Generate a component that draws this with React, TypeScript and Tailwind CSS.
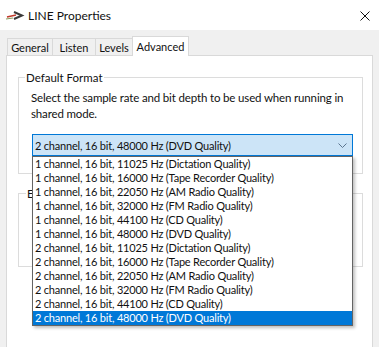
import React from "react";

const formats = [
  "1 channel, 16 bit, 11025 Hz (Dictation Quality)",
  "1 channel, 16 bit, 16000 Hz (Tape Recorder Quality)",
  "1 channel, 16 bit, 22050 Hz (AM Radio Quality)",
  "1 channel, 16 bit, 32000 Hz (FM Radio Quality)",
  "1 channel, 16 bit, 44100 Hz (CD Quality)",
  "1 channel, 16 bit, 48000 Hz (DVD Quality)",
  "2 channel, 16 bit, 11025 Hz (Dictation Quality)",
  "2 channel, 16 bit, 16000 Hz (Tape Recorder Quality)",
  "2 channel, 16 bit, 22050 Hz (AM Radio Quality)",
  "2 channel, 16 bit, 32000 Hz (FM Radio Quality)",
  "2 channel, 16 bit, 44100 Hz (CD Quality)",
  "2 channel, 16 bit, 48000 Hz (DVD Quality)",
];

const tabs = [
  { label: "General", w: "w-[46px]" },
  { label: "Listen", w: "w-[44px]" },
  { label: "Levels", w: "w-[38px]" },
];

const App: React.FC = () => {
  return (
    <div className="w-[379px] h-[347px] overflow-hidden bg-[#f0f0f0] font-['Lato',sans-serif] text-[11px] text-[#111]">
      {/* title bar */}
      <div className="h-[30px] bg-white flex items-center pt-[1px]">
        <svg width="20" height="10" viewBox="0 0 20 10" className="ml-[5px]" aria-hidden="true">
          <path d="M9 1 L17 4.5 L9 8" fill="none" stroke="#3a3a3a" strokeWidth="2" />
          <path d="M2 6 L11 4" stroke="#c0392b" strokeWidth="1.5" />
          <path d="M1 8 L8 7" stroke="#8a9a5b" strokeWidth="1.2" />
        </svg>
        <span className="ml-[3px] text-[12px] leading-none">LINE Properties</span>
        <svg width="10" height="10" viewBox="0 0 10 10" className="ml-auto mr-[9px]" aria-hidden="true">
          <path d="M0.5 0.5 L9.5 9.5 M9.5 0.5 L0.5 9.5" stroke="#111" strokeWidth="1" />
        </svg>
      </div>

      <div className="px-[6px] pt-[6px]">
        {/* tabs */}
        <div className="flex items-end h-[19px] pl-[1px]">
          {tabs.map((t, i) => (
            <div
              key={t.label}
              className={`${t.w} h-[17px] flex items-center justify-center pt-[3px] border border-b-0 border-[#d9d9d9] bg-[#f0f0f0] ${i > 0 ? "-ml-px" : ""}`}
            >
              {t.label}
            </div>
          ))}
          <div className="w-[57px] h-[20px] -ml-px -mb-px relative z-10 flex items-start pt-[2px] justify-center border border-b-0 border-[#d9d9d9] bg-white">
            Advanced
          </div>
        </div>

        {/* panel */}
        <div className="bg-white border border-[#d9d9d9] h-[300px] pt-[21px] pl-[11px] pr-[9px]">
          <div className="relative h-[97px] border border-[#dcdcdc] pt-[12px] pl-[12px]">
            <span className="absolute -top-[8px] left-[6px] px-[1px] bg-white leading-[16px] text-[11.5px]">Default Format</span>
            <p className="leading-[16px] whitespace-nowrap text-[11.5px] tracking-[-0.15px]">
              Select the sample rate and bit depth to be used when running in
              <br />
              shared mode.
            </p>
            <div className="relative mt-[12px] ml-[1px] w-[321px] h-[22px] bg-[#cce4f7] border border-[#0078d7] flex items-center pl-[2px]">
              <span className="leading-none tracking-[-0.2px]">2 channel, 16 bit, 48000 Hz (DVD Quality)</span>
              <svg width="9" height="5" viewBox="0 0 9 5" className="ml-auto mr-[5px]" aria-hidden="true">
                <path d="M0.5 0.5 L4.5 4.5 L8.5 0.5" fill="none" stroke="#5b7590" strokeWidth="1" />
              </svg>
              {/* open list */}
              <div className="absolute top-[calc(100%+1px)] -left-px -right-px z-20 bg-white border border-[#646464] shadow-[2px_2px_3px_rgba(0,0,0,0.25)]">
                {formats.map((f, i) => (
                  <div
                    key={f}
                    className={`h-[14px] leading-[14px] pl-[2px] whitespace-nowrap tracking-[-0.2px] ${
                      i === formats.length - 1 ? "bg-[#0078d7] text-white" : ""
                    }`}
                  >
                    {f}
                  </div>
                ))}
              </div>
            </div>
          </div>

          <div className="relative mt-[19px] h-[74px] border border-[#dcdcdc]">
            <span className="absolute -top-[8px] left-[7px] px-[1px] whitespace-nowrap bg-white leading-[16px] text-[11.5px]">
              Exclusive Mode
            </span>
          </div>
        </div>
      </div>
    </div>
  );
};

export default App;
